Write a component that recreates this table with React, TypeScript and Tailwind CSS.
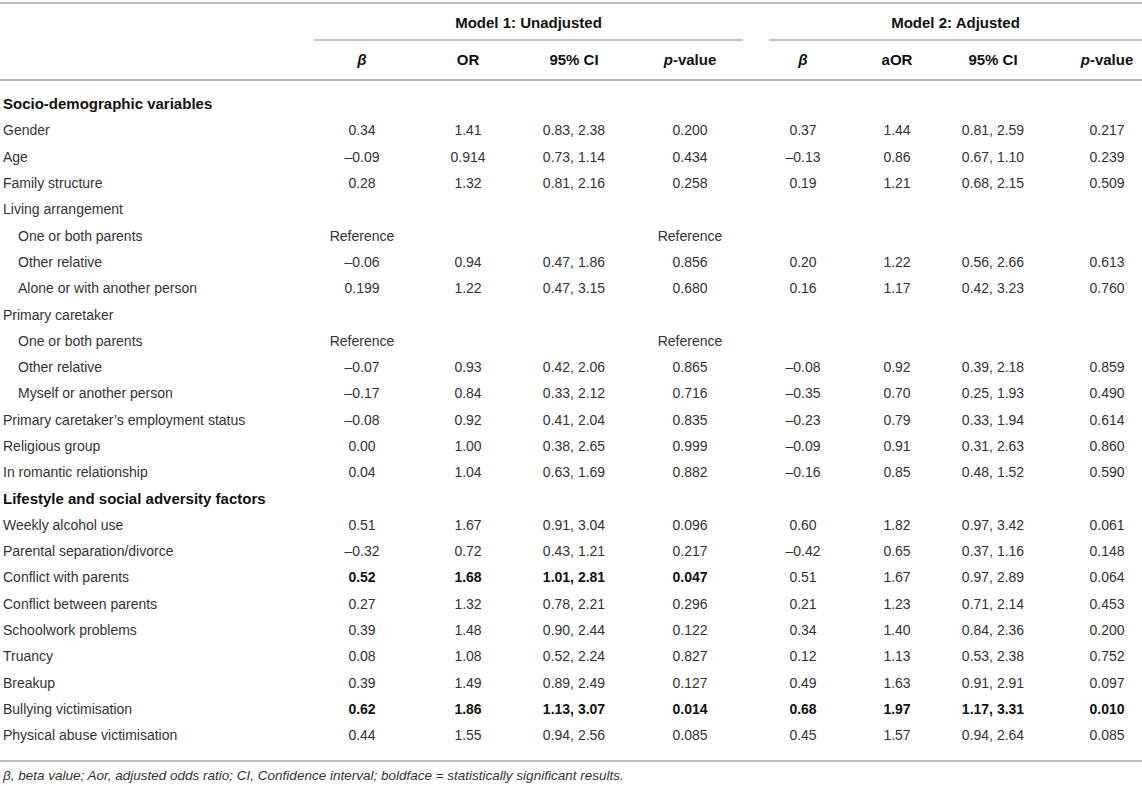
type Cell = string | { v: string; b: true };

type Row =
  | { kind: 'section'; label: string }
  | { kind: 'data'; label: string; indent?: boolean; cells: Cell[] };

// widths of the eight value columns, placed so their centres line up with the headers
const COLS = [
  'w-[96px]',
  'w-[116px]',
  'w-[96px]',
  'w-[136px]',
  'w-[90px]',
  'w-[98px]',
  'w-[94px]',
  'w-[102px] pl-[32px]',
];

const b = (v: string): Cell => ({ v, b: true });

const ROWS: Row[] = [
  { kind: 'section', label: 'Socio-demographic variables' },
  { kind: 'data', label: 'Gender', cells: ['0.34', '1.41', '0.83, 2.38', '0.200', '0.37', '1.44', '0.81, 2.59', '0.217'] },
  { kind: 'data', label: 'Age', cells: ['–0.09', '0.914', '0.73, 1.14', '0.434', '–0.13', '0.86', '0.67, 1.10', '0.239'] },
  { kind: 'data', label: 'Family structure', cells: ['0.28', '1.32', '0.81, 2.16', '0.258', '0.19', '1.21', '0.68, 2.15', '0.509'] },
  { kind: 'data', label: 'Living arrangement', cells: [] },
  { kind: 'data', label: 'One or both parents', indent: true, cells: ['Reference', '', '', 'Reference'] },
  { kind: 'data', label: 'Other relative', indent: true, cells: ['–0.06', '0.94', '0.47, 1.86', '0.856', '0.20', '1.22', '0.56, 2.66', '0.613'] },
  { kind: 'data', label: 'Alone or with another person', indent: true, cells: ['0.199', '1.22', '0.47, 3.15', '0.680', '0.16', '1.17', '0.42, 3.23', '0.760'] },
  { kind: 'data', label: 'Primary caretaker', cells: [] },
  { kind: 'data', label: 'One or both parents', indent: true, cells: ['Reference', '', '', 'Reference'] },
  { kind: 'data', label: 'Other relative', indent: true, cells: ['–0.07', '0.93', '0.42, 2.06', '0.865', '–0.08', '0.92', '0.39, 2.18', '0.859'] },
  { kind: 'data', label: 'Myself or another person', indent: true, cells: ['–0.17', '0.84', '0.33, 2.12', '0.716', '–0.35', '0.70', '0.25, 1.93', '0.490'] },
  { kind: 'data', label: 'Primary caretaker’s employment status', cells: ['–0.08', '0.92', '0.41, 2.04', '0.835', '–0.23', '0.79', '0.33, 1.94', '0.614'] },
  { kind: 'data', label: 'Religious group', cells: ['0.00', '1.00', '0.38, 2.65', '0.999', '–0.09', '0.91', '0.31, 2.63', '0.860'] },
  { kind: 'data', label: 'In romantic relationship', cells: ['0.04', '1.04', '0.63, 1.69', '0.882', '–0.16', '0.85', '0.48, 1.52', '0.590'] },
  { kind: 'section', label: 'Lifestyle and social adversity factors' },
  { kind: 'data', label: 'Weekly alcohol use', cells: ['0.51', '1.67', '0.91, 3.04', '0.096', '0.60', '1.82', '0.97, 3.42', '0.061'] },
  { kind: 'data', label: 'Parental separation/divorce', cells: ['–0.32', '0.72', '0.43, 1.21', '0.217', '–0.42', '0.65', '0.37, 1.16', '0.148'] },
  { kind: 'data', label: 'Conflict with parents', cells: [b('0.52'), b('1.68'), b('1.01, 2.81'), b('0.047'), '0.51', '1.67', '0.97, 2.89', '0.064'] },
  { kind: 'data', label: 'Conflict between parents', cells: ['0.27', '1.32', '0.78, 2.21', '0.296', '0.21', '1.23', '0.71, 2.14', '0.453'] },
  { kind: 'data', label: 'Schoolwork problems', cells: ['0.39', '1.48', '0.90, 2.44', '0.122', '0.34', '1.40', '0.84, 2.36', '0.200'] },
  { kind: 'data', label: 'Truancy', cells: ['0.08', '1.08', '0.52, 2.24', '0.827', '0.12', '1.13', '0.53, 2.38', '0.752'] },
  { kind: 'data', label: 'Breakup', cells: ['0.39', '1.49', '0.89, 2.49', '0.127', '0.49', '1.63', '0.91, 2.91', '0.097'] },
  { kind: 'data', label: 'Bullying victimisation', cells: [b('0.62'), b('1.86'), b('1.13, 3.07'), b('0.014'), b('0.68'), b('1.97'), b('1.17, 3.31'), b('0.010')] },
  { kind: 'data', label: 'Physical abuse victimisation', cells: ['0.44', '1.55', '0.94, 2.56', '0.085', '0.45', '1.57', '0.94, 2.64', '0.085'] },
];

const SUBHEADERS = [
  <span className="italic">β</span>,
  <span>OR</span>,
  <span>95% CI</span>,
  <span><span className="italic">p</span>-value</span>,
  <span className="italic">β</span>,
  <span>aOR</span>,
  <span>95% CI</span>,
  <span><span className="italic">p</span>-value</span>,
];

function ValueCell({ cell, col }: { cell: Cell; col: string }) {
  const bold = typeof cell !== 'string';
  const text = typeof cell === 'string' ? cell : cell.v;
  return (
    <div className={`${col} flex shrink-0 justify-center whitespace-nowrap`}>
      <span className={bold ? 'font-bold text-[#111]' : ''}>{text}</span>
    </div>
  );
}

export default function App() {
  return (
    <div
      className="w-[1142px] h-[786px] overflow-hidden bg-white text-[14px] leading-5 text-[#333]"
      style={{ fontFamily: '"Liberation Sans", Arial, sans-serif' }}
    >
      <div className="mt-[2px] border-t-2 border-[#bcbcbc]" />

      {/* model group header */}
      <div className="flex text-[15px] font-bold text-[#111]">
        <div className="w-[314px] shrink-0" />
        <div className="w-[444px] shrink-0 pr-[15px]">
          <div className="border-b-2 border-[#c6c6c6] pt-[9px] pb-[6px] text-center">Model 1: Unadjusted</div>
        </div>
        <div className="w-[384px] shrink-0 pl-[11px]">
          <div className="border-b-2 border-[#c6c6c6] pt-[9px] pb-[6px] text-center">Model 2: Adjusted</div>
        </div>
      </div>

      {/* column header */}
      <div className="flex border-b-2 border-[#bcbcbc] py-[9px] text-[15px] font-bold text-[#111]">
        <div className="w-[314px] shrink-0" />
        {SUBHEADERS.map((h, i) => (
          <div key={i} className={`${COLS[i]} flex shrink-0 justify-center whitespace-nowrap`}>
            {h}
          </div>
        ))}
      </div>

      <div className="pt-[10px]">
        {ROWS.map((row, i) =>
          row.kind === 'section' ? (
            <div key={i} className="flex h-[26.3px] items-center pl-[3px] text-[15px] font-bold text-[#111]">
              {row.label}
            </div>
          ) : (
            <div key={i} className="flex h-[26.3px] items-center">
              <div className={`w-[314px] shrink-0 whitespace-nowrap ${row.indent ? 'pl-[18px]' : 'pl-[3px]'}`}>
                {row.label}
              </div>
              {row.cells.map((c, j) => (
                <ValueCell key={j} cell={c} col={COLS[j]} />
              ))}
            </div>
          ),
        )}
      </div>

      <div className="mt-[12px] border-t-2 border-[#bcbcbc] pt-[6px] pl-[3px] text-[13.5px] leading-4 italic text-[#333]">
        β, beta value; Aor, adjusted odds ratio; CI, Confidence interval; boldface = statistically significant results.
      </div>
    </div>
  );
}
